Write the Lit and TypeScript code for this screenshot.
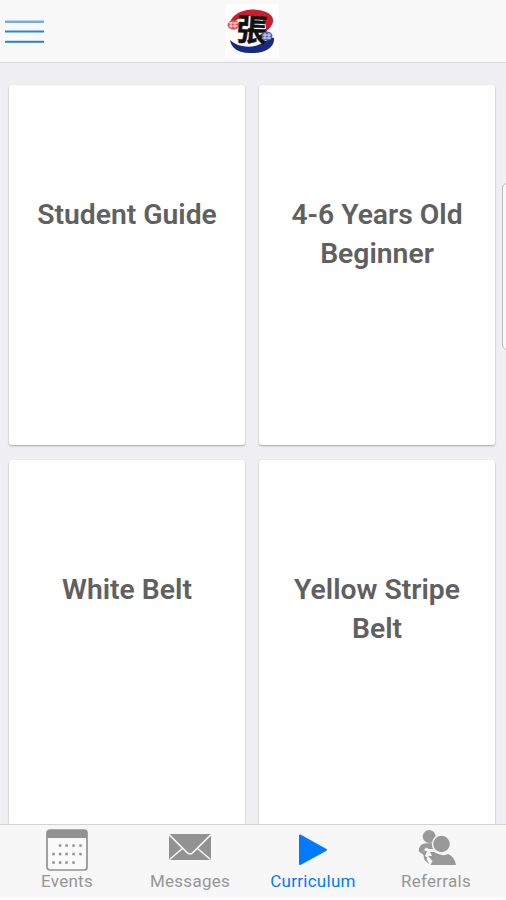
import { LitElement, html, css, svg } from "lit";
import { customElement, property } from "lit/decorators.js";
import { classMap } from "lit/directives/class-map.js";

const calendarDots = [
  [14, 20.5, 27.5, 34.5].map((x) => [x, 16.5]),
  [7.5, 14, 20.5, 27.5, 34.5].map((x) => [x, 25]),
  [7.5, 14, 20.5, 27.5].map((x) => [x, 33.5]),
];

const icons: Record<string, unknown> = {
  events: html`<svg width="42" height="42" viewBox="0 0 42 42">
    <rect x="1" y="1" width="40" height="40" rx="3" fill="#fafafa" stroke="#929292" stroke-width="1.7" />
    <path d="M1 9V4Q1 1 4 1H38Q41 1 41 4V9Z" fill="#929292" />
    ${calendarDots.flat().map(([x, y]) => svg`<rect x=${x - 1.2} y=${y - 1.2} width="2.5" height="2.5" fill="#929292" />`)}
  </svg>`,
  messages: html`<svg width="42" height="42" viewBox="0 0 42 42">
    <rect y="5" width="42" height="26" fill="#929292" />
    <path d="M0 5.500L17.500 23Q21 27 24.500 23L42 5.500M0.500 30.500L14 19M41.500 30.500L28 19" fill="none" stroke="#f7f7f7" stroke-width="1.600" />
  </svg>`,
  curriculum: html`<svg width="42" height="42" viewBox="0 0 42 42">
    <path d="M8 6.500V35L34 20.800Z" fill="#007aff" stroke="#007aff" stroke-width="2" stroke-linejoin="round" />
  </svg>`,
  referrals: html`<svg width="42" height="42" viewBox="0 0 42 42">
    <g fill="#999">
      <circle cx="14.200" cy="7.500" r="6.500" />
      <path d="M3.500 22Q4 16 9 14.500L18 14L19 20L14 20L11 18.500L9 21L12 22.500L8 22.500L6 24Z" />
      <path d="M5 23L12 22L10 27L12.500 28.500L11.500 30L14.500 35.500L9.500 31L8.500 26Z" />
      <path d="M15.500 36L17.500 32L13 27L17 27L15 23L19 23Q27 28 33 25Q40 28 41 36Z" />
      <circle cx="26.500" cy="15" r="9" stroke="#f7f7f7" stroke-width="1.400" />
    </g>
  </svg>`,
};

const logo = html`<svg width="54" height="54" viewBox="0 0 54 54">
  <rect width="54" height="54" fill="#fdfdfd" />
  <path d="M5 20C6 9 22 4 33 6C50 8 53 19 40 28C44 17 35 12 24 12C14 12 11 18 5 20Z" fill="#c91e2d" />
  <path d="M5 36C10 41 22 45 33 41C42 38 44 33 49 34C50 44 38 50 25 49C12 49 6 43 5 36Z" fill="#172a83" />
  <ellipse cx="8.500" cy="21" rx="6" ry="4.700" fill="#d9555f" />
  <path d="M4 19H13M4 22H13M6 18V24M10 18V24" stroke="#f7dddd" stroke-width="1" />
  <text class="glyph" x="27" y="37" text-anchor="middle" transform="rotate(4 26 27)">張</text>
  <ellipse cx="42" cy="32" rx="5.500" ry="4.500" fill="#5965ac" />
  <path d="M38 31H46M38 34H46M40 29V35M44 29V35" stroke="#d6daf0" stroke-width="1" />
</svg>`;

@customElement("curriculum-card")
class CurriculumCard extends LitElement {
  @property({ type: Array }) lines: string[] = [];
  static styles = css`
    :host {
      display: block;
      box-sizing: border-box;
      padding-top: 111px;
      background: #fff;
      border-radius: 3px;
      box-shadow: 0 1px 2px rgba(0, 0, 0, 0.32);
      text-align: center;
      font: 600 28.300px/38.500px Roboto, sans-serif;
      color: #606060;
    }
    .line { white-space: nowrap; }
  `;
  render() {
    return this.lines.map((l) => html`<div class="line">${l}</div>`);
  }
}

@customElement("app-root")
class AppRoot extends LitElement {
  static styles = css`
    :host {
      display: flex;
      flex-direction: column;
      position: relative;
      height: 900px;
      overflow: hidden;
      background: #efeff4;
      font-family: Roboto, sans-serif;
    }
    header {
      display: grid;
      grid-template-columns: 1fr 54px 1fr;
      align-items: center;
      flex: none;
      box-sizing: border-box;
      height: 63px;
      padding: 0 7px 0 5px;
      background: #f8f8f8;
      border-bottom: 1px solid #d9d9dc;
    }
    .menu { display: block; margin-top: 1px; }
    .glyph {
      font: 700 31px "Noto Sans CJK TC", sans-serif;
      fill: #111;
      stroke: #111;
      stroke-width: 0.5px;
    }
    main {
      flex: 1;
      min-height: 0;
      overflow: hidden;
      display: grid;
      grid-template-columns: 236px 236px;
      grid-template-rows: 360px 375px;
      align-content: start;
      gap: 15px 14px;
      padding: 22px 11px 0 9px;
    }
    .scroll {
      position: absolute;
      box-sizing: border-box;
      right: -10px;
      top: 183px;
      width: 14px;
      height: 167px;
      border: 1px solid #bcbcc2;
      border-radius: 5px;
      background: #f8f8fa;
    }
    nav {
      display: grid;
      grid-template-columns: repeat(4, 123px);
      justify-content: start;
      flex: none;
      box-sizing: border-box;
      height: 76px;
      padding-left: 5px;
      border-top: 1px solid #d3d3d6;
      border-bottom: 2px solid #fff;
      background: #f7f7f7;
    }
    .tab {
      display: flex;
      flex-direction: column;
      align-items: center;
      padding-top: 4px;
      font-size: 17px;
      line-height: 20px;
      letter-spacing: 0.28px;
      color: #969696;
    }
    .tab svg { display: block; }
    .tab span { padding-left: 1px; }
    .active { color: #007aff; }
  `;
  private cards = [["Student Guide"], ["4-6 Years Old", "Beginner"], ["White Belt"], ["Yellow Stripe", "Belt"]];
  private tabs = ["Events", "Messages", "Curriculum", "Referrals"];
  render() {
    return html`
      <header>
        <svg class="menu" width="39" height="24" viewBox="0 0 39 24">
          <rect y="0.500" width="39" height="2.500" fill="#78abe0" />
          <rect y="10.500" width="39" height="2" fill="#2585d6" />
          <rect y="20.800" width="39" height="2" fill="#2b7fd0" />
        </svg>
        ${logo}
      </header>
      <main>${this.cards.map((c) => html`<curriculum-card .lines=${c}></curriculum-card>`)}</main>
      <nav>
        ${this.tabs.map((t) => html`<div class=${classMap({ tab: true, active: t === "Curriculum" })}>
          ${icons[t.toLowerCase()]}<span>${t}</span>
        </div>`)}
      </nav>
      <div class="scroll"></div>
    `;
  }
}
